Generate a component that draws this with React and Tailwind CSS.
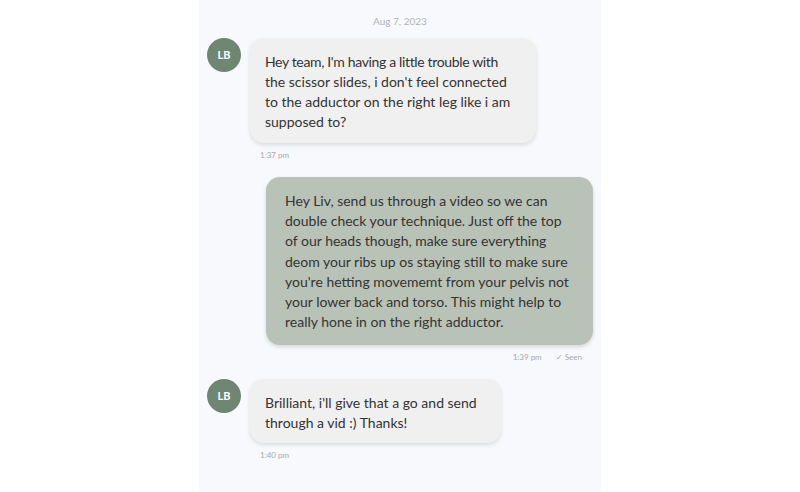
export default function App() {
  const font = { fontFamily: "Lato, 'Noto Sans', sans-serif" };
  return (
    <div className="w-[800px] h-[492px] bg-white flex justify-center" style={font}>
      <div className="w-[402px] h-full bg-[#f8f9fd] px-[8px] flex flex-col">
        <div className="h-[14px] mt-[14px] text-center text-[10px] leading-[14px] text-[#b3b3b3]">Aug 7, 2023</div>

        <div className="mt-[10px] flex items-start">
          <div className="w-[34px] h-[34px] rounded-full bg-[#6f8672] text-white text-[11px] font-bold flex items-center justify-center shrink-0">LB</div>
          <div className="ml-[9px] flex flex-col">
            <div className="w-[286px] bg-[#f0f0f0] rounded-[14px] pl-[15px] pr-[10px] pt-[14px] pb-[11px] text-[14px] leading-[20px] text-[#333] shadow-[0_2px_4px_rgba(0,0,0,0.12)]">
              <span className="block whitespace-nowrap tracking-[-0.35px]">Hey team, I'm having a little trouble with</span>
              <span className="block whitespace-nowrap">the scissor slides, i don't feel connected</span>
              <span className="block whitespace-nowrap">to the adductor on the right leg like i am</span>
              <span className="block whitespace-nowrap">supposed to?</span>
            </div>
            <div className="mt-[6px] ml-[10px] text-[8px] leading-[12px] text-[#a8a8a8]">1:37 pm</div>
          </div>
        </div>

        <div className="mt-[16px] flex flex-col items-end">
          <div className="w-[327px] bg-[#b9c2b6] rounded-[14px] pl-[19px] pr-[16px] pt-[14px] pb-[13px] text-[14px] leading-[20.2px] text-[#333] shadow-[0_2px_4px_rgba(0,0,0,0.14)]">
            Hey Liv, send us through a video so we can double check your technique. Just off the top of our heads though, make sure everything deom your ribs up os staying still to make sure you're hetting movememt from your pelvis not your lower back and torso. This might help to really hone in on the right adductor.
          </div>
          <div className="mt-[6px] mr-[11px] flex gap-[14px] text-[8px] leading-[12px] text-[#a8a8a8]">
            <span>1:39 pm</span>
            <span>✓ Seen</span>
          </div>
        </div>

        <div className="mt-[16px] flex items-start">
          <div className="w-[34px] h-[34px] rounded-full bg-[#6f8672] text-white text-[11px] font-bold flex items-center justify-center shrink-0">LB</div>
          <div className="ml-[9px] flex flex-col">
            <div className="w-[251px] bg-[#f0f0f0] rounded-[14px] pl-[15px] pr-[10px] pt-[14px] pb-[10px] text-[14px] leading-[20px] text-[#333] shadow-[0_2px_4px_rgba(0,0,0,0.12)]">
              Brilliant, i'll give that a go and send through a vid :) Thanks!
            </div>
            <div className="mt-[6px] ml-[10px] text-[8px] leading-[12px] text-[#a8a8a8]">1:40 pm</div>
          </div>
        </div>
      </div>
    </div>
  );
}
